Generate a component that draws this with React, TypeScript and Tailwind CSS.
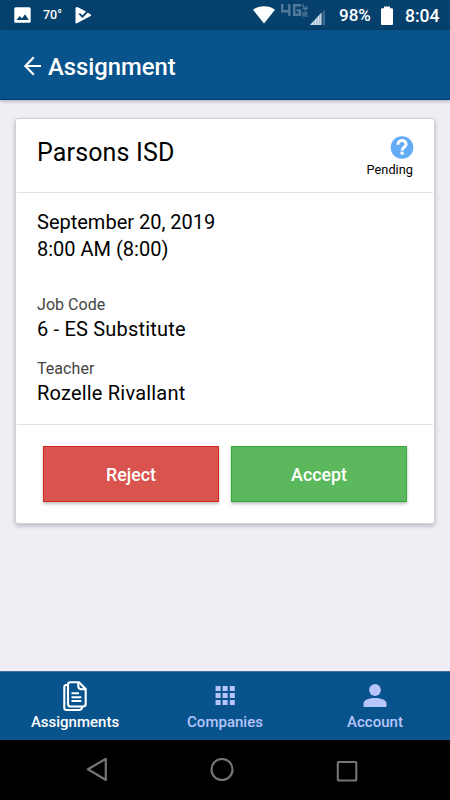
import React from 'react';

function StatusBar() {
  return (
    <div className="flex h-[30px] shrink-0 items-center bg-[#05416c] text-white">
      <svg className="ml-[14px] h-4 w-[17px]" viewBox="0 0 17 16">
        <rect x="0.3" y="0.2" width="16.4" height="15.6" rx="1.6" fill="#fff" />
        <path d="M2.5 13 L5.7 9 L8 11.4 L11 7.3 L14.8 13 Z" fill="#05416c" />
      </svg>
      <span className="ml-[12px] w-[32px] text-[12.5px] font-medium leading-[30px]">70°</span>
      <svg className="h-[17px] w-[17px]" viewBox="0 0 17 17">
        <path d="M1 .8 L3 .8 L12.5 5.8 L16 8.3 L1 16.2 Z" fill="#fff" stroke="#fff" strokeLinejoin="round" />
        <path d="M4.3 6.6 L7.5 9.6 L14.5 2.4" fill="none" stroke="#05416c" strokeWidth="1.9" />
      </svg>
      <svg className="ml-[160px] h-[18px] w-6" viewBox="0 0 24 18">
        <path d="M1 3.8 C7-.8 17-.8 23 3.8 L12 17.5 Z" fill="#fff" />
      </svg>
      <svg className="ml-[4px] h-[24px] w-[49px]" viewBox="0 0 49 24">
        <g fill="none" stroke="#52799a" strokeWidth="2.4">
          <path d="M2.2 1 V8.2 H10.5 M9.3 1 V13" />
          <path d="M21 2.2 H14.2 V11.8 H20 V7.5 H16.5" />
        </g>
        <g fill="none" stroke="#527998" strokeWidth="1.1">
          <path d="M23 .7 V4 H28" />
          <path d="M22.5 5.5 H28 M25.3 5.5 V8.7" />
          <path d="M28 9.8 H23 V13 H28 M23 11.4 H27" />
        </g>
        <path d="M30 22 L41.5 9.5 V22 Z" fill="#d9e4ed" />
        <path d="M34.2 17 V22 M37 14 V22 M39.8 11 V22" stroke="#6f92af" strokeWidth=".7" />
        <path d="M42.5 9 L45 6.5 V22 H42.5 Z" fill="#3a698f" />
      </svg>
      <span className="ml-[10px] w-[42px] whitespace-nowrap text-[17px] font-medium leading-[30px]">98%</span>
      <svg className="h-[19px] w-3" viewBox="0 0 12 19">
        <path d="M3 .5 H9 V2.3 H11 Q12 2.3 12 3.3 V18 Q12 19 11 19 H1 Q0 19 0 18 V3.3 Q0 2.3 1 2.3 H3 Z" fill="#fff" />
      </svg>
      <span className="ml-[12px] pt-px text-[17.5px] font-medium leading-[30px]">8:04</span>
    </div>
  );
}

function Header() {
  return (
    <header className="z-10 flex h-[70px] shrink-0 items-center border-b border-[#003a7c] bg-[#08538b] pt-[4px] pl-[23px] text-white shadow-[0_1px_4px_rgba(0,0,0,.3)]">
      <svg className="mt-[-2px] h-5 w-[19px]" viewBox="0 0 19 20">
        <path d="M10.8 1.2 L2.4 10 L10.8 18.8 M2.5 10 H18" fill="none" stroke="#fff" strokeWidth="2.2" />
      </svg>
      <h1 className="ml-[6px] text-[23.8px] font-medium leading-8">Assignment</h1>
    </header>
  );
}

function Detail({ label, value }: { label: string; value: string }) {
  return (
    <div className="h-16">
      <div className="text-[16px] leading-6 tracking-[0.05px] text-[#444]">{label}</div>
      <div className="text-[20px] leading-6 tracking-[0.2px]">{value}</div>
    </div>
  );
}

function AssignmentCard() {
  return (
    <section className="mx-[15px] mt-[18px] h-[406px] rounded-[3px] border border-[#d2d2d6] bg-white px-px text-black shadow-[0_2px_4px_rgba(0,0,0,.22)]">
      <div className="flex h-[74px] justify-between border-b border-[#e1e1e1] pr-5 pl-5">
        <h2 className="pt-[18px] text-[25px] leading-8 tracking-[0.15px]">Parsons ISD</h2>
        <div className="flex flex-col items-end pt-[17px]">
          <svg className="mr-[-1px] h-6 w-6" viewBox="0 0 24 24">
            <circle cx="12" cy="11.5" r="11.3" fill="#62acf6" />
            <path d="M7.9 8.8 C7.9 3.3 16.1 3.3 16.1 8.2 C16.1 11.3 12.1 11.2 12.1 14.5" fill="none" stroke="#fff" strokeWidth="3" />
            <rect x="10.5" y="15.6" width="3.2" height="3" fill="#fff" />
          </svg>
          <span className="pt-[2px] text-[12.8px] leading-4">Pending</span>
        </div>
      </div>
      <div className="h-[232px] border-b border-[#e1e1e1] px-5 pt-4">
        <div className="text-[20px] leading-[27px]">September 20, 2019</div>
        <div className="text-[20px] leading-[27px]">8:00 AM (8:00)</div>
        <div className="pt-[30px]">
          <Detail label="Job Code" value="6 - ES Substitute" />
          <Detail label="Teacher" value="Rozelle Rivallant" />
        </div>
      </div>
      <div className="flex gap-3 pt-[21px] pl-[26px] text-[17.8px] font-medium text-white">
        <button className="h-14 w-44 border border-[#d6291f] bg-[#d9534f] pt-[2px] leading-6 shadow-[0_2px_3px_rgba(0,0,0,.26)]">Reject</button>
        <button className="h-14 w-44 border border-[#32ab3a] bg-[#5cb85c] pt-[2px] leading-6 shadow-[0_2px_3px_rgba(0,0,0,.26)]">Accept</button>
      </div>
    </section>
  );
}

function TabBar() {
  return (
    <nav className="grid h-[69px] shrink-0 grid-cols-3 border-t border-[#486f99] bg-[#08538b] text-center text-[15px] font-medium leading-5 text-[#b6c5fb]">
      <div className="flex flex-col items-center pt-[8px] text-white">
        <svg className="h-8 w-6" viewBox="0 0 24 32" fill="none" stroke="#fff" strokeWidth="2.1" strokeLinejoin="round">
          <path d="M5 5 H3.5 Q1.3 5 1.3 7.2 V28 Q1.3 30 3.5 30 H16 Q19 30 19 27" />
          <path d="M7.3 2.2 H16 L22.7 9 V24 Q22.7 26.5 20 26.5 H7.6 Q5 26.5 5 24 V4.5 Q5 2.2 7.3 2.2 Z" />
          <path d="M15.3 2.5 V6.2 Q15.3 9.2 18.5 9.2 H22.5" />
          <path d="M8.5 13.3 H16 M8.5 17.2 H18.3 M8.5 21 H18.3" />
        </svg>
        <span>Assignments</span>
      </div>
      <div className="flex flex-col items-center pt-[8px]">
        <svg className="h-8 w-6" viewBox="0 0 24 32" fill="#b6c5fb">
          <path d="M2.6 6h5v5h-5z M9.6 6h5v5h-5z M16.8 6h5v5h-5z M2.6 13h5v5h-5z M9.6 13h5v5h-5z M16.8 13h5v5h-5z M2.6 20h5v5h-5z M9.6 20h5v5h-5z M16.8 20h5v5h-5z" />
        </svg>
        <span>Companies</span>
      </div>
      <div className="flex flex-col items-center pt-[8px]">
        <svg className="h-8 w-6" viewBox="0 0 24 32" fill="#b6c5fb">
          <circle cx="12" cy="10" r="5.9" />
          <path d="M.5 27 V23.5 C.5 19.5 7 18 12 18 S23.5 19.5 23.5 23.5 V27 Z" />
        </svg>
        <span>Account</span>
      </div>
    </nav>
  );
}

function SystemNavigation() {
  return (
    <div className="flex h-[60px] shrink-0 items-center bg-black pl-[86px]">
      <svg className="h-6 w-[22px]" viewBox="0 0 22 24" fill="none" stroke="#757575" strokeWidth="2.2" strokeLinejoin="round">
        <path d="M19.8 0.8 V22 L2 11.3 Z" />
      </svg>
      <svg className="ml-[102px] h-6 w-6" viewBox="0 0 24 24">
        <circle cx="12" cy="11.5" r="10.5" fill="none" stroke="#757575" strokeWidth="2.2" />
      </svg>
      <svg className="ml-[101px] h-6 w-6" viewBox="0 0 24 24">
        <rect x="2.8" y="4" width="18.5" height="18.5" rx=".7" fill="none" stroke="#757575" strokeWidth="2.1" />
      </svg>
    </div>
  );
}

export default function App() {
  return (
    <div className="flex h-[800px] w-[450px] flex-col overflow-hidden bg-[#efeef5] font-[Roboto,sans-serif]">
      <StatusBar />
      <Header />
      <main className="min-h-0 flex-1">
        <AssignmentCard />
      </main>
      <TabBar />
      <SystemNavigation />
    </div>
  );
}
